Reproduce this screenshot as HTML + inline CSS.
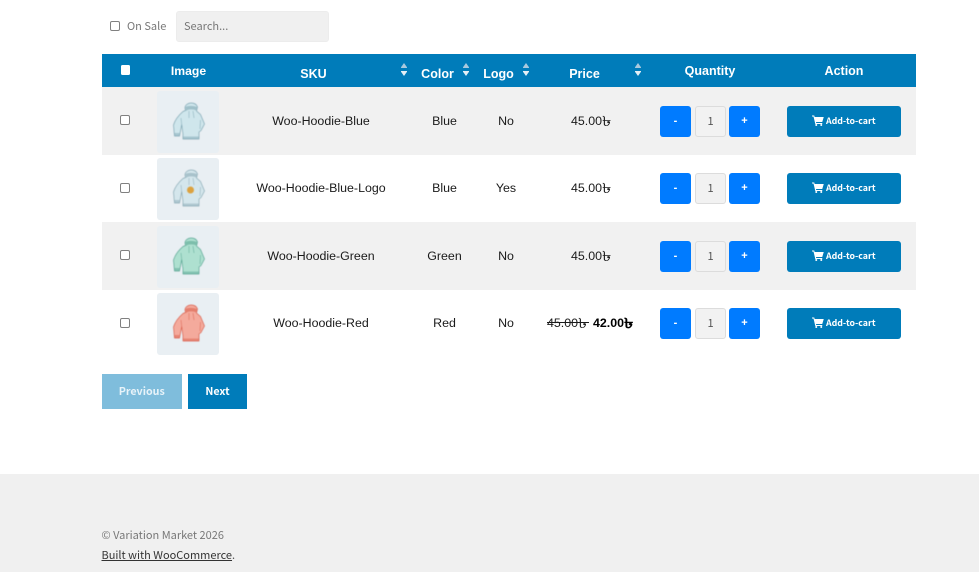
<!DOCTYPE html>
<html lang="en">
<head>
<meta charset="utf-8">
<title>Variation Market</title>
<style>
html,body{margin:0;padding:0;width:979px;height:572px;overflow:hidden;background:#fff}
body{position:relative;font-family:"Liberation Sans",sans-serif;color:#111}
.a{position:absolute}
.src{font-family:"Noto Sans CJK SC","Liberation Sans",sans-serif}
.cb{position:absolute;box-sizing:border-box;width:10px;height:10px;border:1px solid #808080;border-radius:2px;background:#fff}
.th{position:absolute;color:#fff;font-weight:700;font-size:12.5px;line-height:14px;text-align:center;white-space:nowrap;transform:translateX(-50%)}
.row{position:absolute;left:101.5px;width:814.5px}
.td{position:absolute;font-size:12.4px;line-height:14px;text-align:center;white-space:nowrap;transform:translateX(-50%);color:#1a1a1a}
.l{transform:none;text-align:left}
.t{display:inline-block;width:10px;font-size:14px;line-height:10px;vertical-align:-1px;transform:scaleX(1.35);transform-origin:left center;text-align:left}
.img{position:absolute;left:157px;width:62px;height:62px;border-radius:3px;background:#e9eff3}
.img svg{filter:blur(.4px)}
.btn{position:absolute;width:31px;height:31px;border-radius:3px;background:#007bff;color:#fff;font-weight:700;font-size:11px;line-height:30px;text-align:center}
.qty{position:absolute;left:695px;width:31px;height:31px;box-sizing:border-box;border:1.5px solid #dcdcdc;border-radius:3px;background:#f2f2f2;color:#555;font-size:11px;line-height:28px;text-align:center;font-family:"Noto Sans CJK SC",sans-serif}
.cart{position:absolute;left:787px;width:114px;height:31px;border-radius:3px;background:#007cba;color:#fff;font-size:8.8px;font-weight:700;line-height:30px;text-align:center;font-family:"Noto Sans CJK SC",sans-serif;white-space:nowrap}
.cart svg{vertical-align:-2px;margin-right:1.5px}
.arr{position:absolute;width:6px;height:14px}
</style>
</head>
<body>
<svg width="0" height="0" style="position:absolute">
<defs>
<symbol id="h" viewBox="0 0 62 62">
<path d="M34 12 C31 12 28 14 28 17 L28.5 19.5 L26 20.5 C22 24 18 29 16.5 34 L17.500 45 L22.500 45 L24.700 33.700 L26 43 L26 48 L42 48 L42 41 L44 39.500 L47.500 33 L43.500 23.500 L39.500 20 L40.500 16 C39.500 13 37 12 34 12 Z" fill="currentColor" stroke="var(--e)" stroke-width=".7" stroke-linejoin="round"/>
<path d="M28.500 16 C31 14.500 36 14.500 40 16 L39.300 19.500 C36 18 31 18 29 20 Z" fill="var(--e)" opacity=".6"/>
<path d="M26 45.500 L42 45.500 L42 48 L26 48 Z M17.300 42 L22.500 42 L22.500 45 L17.500 45 Z" fill="var(--e)" opacity=".5"/>
<path d="M32 20 L32 27 M36 20 L37 27 M24.700 33.700 L24 27 M43 38 L43.500 29" fill="none" stroke="var(--e)" stroke-width=".6" opacity=".8"/>
</symbol>
<symbol id="cartg" viewBox="0 0 24 22">
<path d="M0 1 H4.500 L5.300 4 H23.500 L20.500 14 H8 L8.400 16 H20.500 V18 H6.600 L3 3 H0 Z" fill="#fff"/>
<circle cx="8.500" cy="20" r="2" fill="#fff"/><circle cx="18.500" cy="20" r="2" fill="#fff"/>
</symbol>
<symbol id="ar" viewBox="0 0 6 14">
<path d="M3 0 L6.500 5 H-.5 Z" fill="#a9c9de"/><path d="M3 13 L6.500 8 H-.5 Z" fill="#e4eef5"/>
</symbol>
</defs>
</svg>

<div class="cb" style="left:110px;top:21px"></div>
<div class="a src" style="left:127px;top:17.500px;font-size:11px;line-height:17px;color:#777">On Sale</div>
<div class="a src" style="left:176px;top:11px;width:153px;height:31px;box-sizing:border-box;padding-left:7px;background:#f0f0f0;border:1px solid #ececec;border-radius:3px;font-size:11px;line-height:28px;color:#777">Search...</div>

<div class="a" style="left:101.500px;top:54px;width:814.500px;height:33px;background:#007cba"></div>
<div class="a" style="left:120.500px;top:65px;width:9.500px;height:9.500px;background:#fff;border-radius:1.500px"></div>
<div class="th" style="left:188.500px;top:63.500px;font-size:12.200px">Image</div>
<div class="th" style="left:313.500px;top:67px">SKU</div>
<svg class="arr" style="left:401px;top:62.500px"><use href="#ar" width="6" height="14"/></svg>
<div class="th" style="left:437.500px;top:67px">Color</div>
<svg class="arr" style="left:463px;top:62.500px"><use href="#ar" width="6" height="14"/></svg>
<div class="th" style="left:498.500px;top:67px">Logo</div>
<svg class="arr" style="left:523px;top:62.500px"><use href="#ar" width="6" height="14"/></svg>
<div class="th" style="left:584.500px;top:67px">Price</div>
<svg class="arr" style="left:635px;top:62.500px"><use href="#ar" width="6" height="14"/></svg>
<div class="th" style="left:710px;top:63.500px">Quantity</div>
<div class="th" style="left:844px;top:63.500px">Action</div>

<div class="row" style="top:87px;height:68px;background:#f1f1f1"></div>
<div class="row" style="top:222px;height:68px;background:#f1f1f1"></div>

<!-- row 1 -->
<div class="cb" style="left:120px;top:115px"></div>
<div class="img" style="top:91px;color:#cfe6ec;--e:#7fa6b3"><svg width="62" height="62"><use href="#h"/></svg></div>
<div class="td" style="left:321px;top:113.500px">Woo-Hoodie-Blue</div>
<div class="td" style="left:444.500px;top:113.500px">Blue</div>
<div class="td" style="left:506px;top:113.500px">No</div>
<div class="td l" style="left:571px;top:113.500px">45.00<span class="t">৳</span></div>
<div class="btn" style="left:660px;top:106px">-</div><div class="qty" style="top:106px">1</div><div class="btn" style="left:729px;top:106px">+</div>
<div class="cart" style="top:106px"><svg width="12" height="11"><use href="#cartg"/></svg>Add-to-cart</div>

<!-- row 2 -->
<div class="cb" style="left:120px;top:183px"></div>
<div class="img" style="top:158px;color:#d4e6ec;--e:#8aaab5"><svg width="62" height="62"><use href="#h"/><circle cx="33.500" cy="32" r="3.500" fill="#dca23f"/></svg></div>
<div class="td" style="left:321px;top:181px">Woo-Hoodie-Blue-Logo</div>
<div class="td" style="left:444.500px;top:181px">Blue</div>
<div class="td" style="left:506px;top:181px">Yes</div>
<div class="td l" style="left:571px;top:181px">45.00<span class="t">৳</span></div>
<div class="btn" style="left:660px;top:173px">-</div><div class="qty" style="top:173px">1</div><div class="btn" style="left:729px;top:173px">+</div>
<div class="cart" style="top:173px"><svg width="12" height="11"><use href="#cartg"/></svg>Add-to-cart</div>

<!-- row 3 -->
<div class="cb" style="left:120px;top:250px"></div>
<div class="img" style="top:226px;color:#aee0d0;--e:#5aa693"><svg width="62" height="62"><use href="#h"/></svg></div>
<div class="td" style="left:321px;top:248.500px">Woo-Hoodie-Green</div>
<div class="td" style="left:444.500px;top:248.500px">Green</div>
<div class="td" style="left:506px;top:248.500px">No</div>
<div class="td l" style="left:571px;top:248.500px">45.00<span class="t">৳</span></div>
<div class="btn" style="left:660px;top:241px">-</div><div class="qty" style="top:241px">1</div><div class="btn" style="left:729px;top:241px">+</div>
<div class="cart" style="top:241px"><svg width="12" height="11"><use href="#cartg"/></svg>Add-to-cart</div>

<!-- row 4 -->
<div class="cb" style="left:120px;top:318px"></div>
<div class="img" style="top:293px;color:#f4aa9c;--e:#d9604d"><svg width="62" height="62"><use href="#h"/></svg></div>
<div class="td" style="left:321px;top:316px">Woo-Hoodie-Red</div>
<div class="td" style="left:444.500px;top:316px">Red</div>
<div class="td" style="left:506px;top:316px">No</div>
<div class="td l" style="left:547px;top:316px">45.00<span class="t">৳</span></div>
<div class="a" style="left:547px;top:322px;width:42px;height:1px;background:#1a1a1a"></div>
<div class="td l" style="left:593px;top:316px;font-weight:700;color:#000">42.00<span class="t">৳</span></div>
<div class="btn" style="left:660px;top:308px">-</div><div class="qty" style="top:308px">1</div><div class="btn" style="left:729px;top:308px">+</div>
<div class="cart" style="top:308px"><svg width="12" height="11"><use href="#cartg"/></svg>Add-to-cart</div>

<!-- pagination -->
<div class="a src" style="left:101.500px;top:374px;width:80.500px;height:35px;background:#7fbddc;color:#e8f3f9;font-weight:700;font-size:10.700px;line-height:35px;text-align:center">Previous</div>
<div class="a src" style="left:188px;top:374px;width:59px;height:35px;background:#007cba;color:#fff;font-weight:700;font-size:10.700px;line-height:35px;text-align:center">Next</div>

<!-- footer -->
<div class="a" style="left:0;top:474px;width:979px;height:98px;background:#f0f0f0"></div>
<div class="a src" style="left:101.500px;top:526px;font-size:11px;line-height:18px;color:#777;white-space:nowrap">© Variation Market 2026</div>
<div class="a src" style="left:101.500px;top:546px;font-size:11px;line-height:18px;color:#555;white-space:nowrap"><span style="text-decoration:underline;color:#333">Built with WooCommerce</span>.</div>
</body>
</html>
